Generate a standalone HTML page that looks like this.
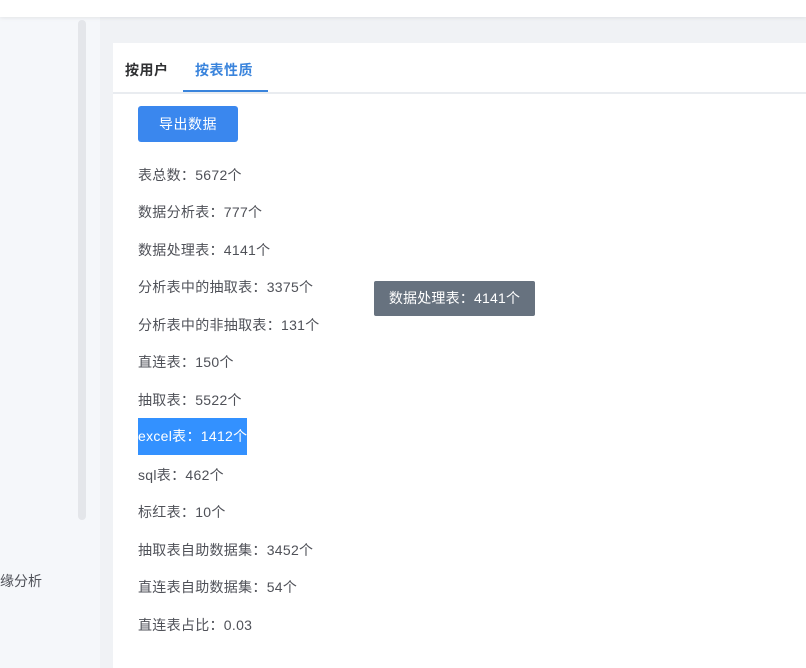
<!DOCTYPE html>
<html><head><meta charset="utf-8"><style>
*{margin:0;padding:0;box-sizing:border-box}
html,body{width:806px;height:668px;overflow:hidden}
body{background:#f0f2f5;font-family:"Liberation Sans","Noto Sans CJK SC",sans-serif;position:relative}
.top{position:absolute;left:0;top:0;width:806px;height:17px;background:#fff;box-shadow:0 1px 4px rgba(0,0,0,.08);z-index:2}
.side{position:absolute;left:0;top:17px;width:100px;height:660px;background:#f5f7fa}
.sb{position:absolute;left:78px;top:20px;width:8px;height:500px;background:#e4e6ea;border-radius:4px;z-index:3}
.card{position:absolute;left:113px;top:43px;width:700px;height:640px;background:#fff}
.tabs{height:51px;border-bottom:2px solid #e9ecf0;position:relative}
.tab{position:absolute;top:17px;font-size:14px;font-weight:bold;color:#303133;letter-spacing:.5px}
.act{color:#3a84dc}
.ul{position:absolute;left:70px;top:47px;width:85px;height:2px;background:#3a84dc}
.btn{position:absolute;left:25px;top:63px;width:100px;height:36px;background:#3a87ee;border-radius:3px;color:#fff;font-size:14px;text-align:center;line-height:36px;letter-spacing:.5px}
.row{position:absolute;left:25px;font-size:14px;color:#4f5158;line-height:20px;letter-spacing:.3px}
.hl{background:#3391ff;color:#fff;height:37px;line-height:37px;padding-right:0}
.tip{position:absolute;left:374px;top:281px;width:161px;height:35px;background:#67727f;border-radius:2px;color:#fff;font-size:14px;line-height:35px;text-align:center;letter-spacing:.2px}
</style></head><body>
<div class="top"></div>
<div class="side"><div style="position:absolute;left:0;top:554px;font-size:14px;color:#4f5158">缘分析</div></div>
<div class="sb"></div>
<div class="card">
<div class="tabs"><span class="tab" style="left:12px">按用户</span><span class="tab act" style="left:82px">按表性质</span><div class="ul"></div></div>
<div class="btn">导出数据</div>
<div class="row" style="top:122px">表总数：5672个</div>
<div class="row" style="top:159px">数据分析表：777个</div>
<div class="row" style="top:197px">数据处理表：4141个</div>
<div class="row" style="top:234px">分析表中的抽取表：3375个</div>
<div class="row" style="top:272px">分析表中的非抽取表：131个</div>
<div class="row" style="top:309px">直连表：150个</div>
<div class="row" style="top:347px">抽取表：5522个</div>
<div class="row hl" style="top:375px">excel表：1412个</div>
<div class="row" style="top:422px">sql表：462个</div>
<div class="row" style="top:459px">标红表：10个</div>
<div class="row" style="top:497px">抽取表自助数据集：3452个</div>
<div class="row" style="top:534px">直连表自助数据集：54个</div>
<div class="row" style="top:572px">直连表占比：0.03</div>
</div>
<div class="tip">数据处理表：4141个</div>
</body></html>
